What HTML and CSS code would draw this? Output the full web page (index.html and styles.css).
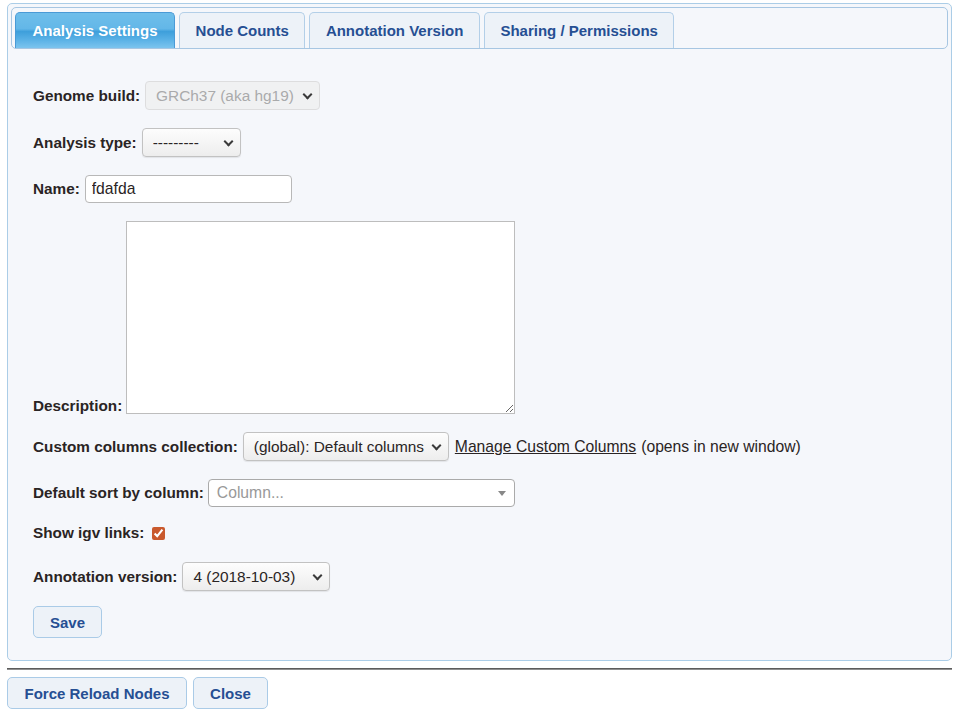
FILE: index.html
```html
<!DOCTYPE html>
<html>
<head>
<meta charset="utf-8">
<link rel="stylesheet" href="styles.css">
</head>
<body>
<div class="dialog">
  <div class="tabs">
    <ul class="tab-nav">
      <li class="tab active">Analysis Settings</li>
      <li class="tab">Node Counts</li>
      <li class="tab">Annotation Version</li>
      <li class="tab">Sharing / Permissions</li>
    </ul>
    <div class="panel">
      <form class="settings">
        <div class="row">
          <label class="lbl">Genome build:</label>
          <span class="selwrap"><select class="sel sel-genome" disabled><option>GRCh37 (aka hg19)</option></select></span>
        </div>
        <div class="row">
          <label class="lbl">Analysis type:</label>
          <span class="selwrap"><select class="sel sel-type"><option>---------</option></select></span>
        </div>
        <div class="row">
          <label class="lbl">Name:</label>
          <input class="txt" type="text" value="fdafda">
        </div>
        <div class="row row-desc">
          <label class="lbl">Description:</label>
          <textarea class="desc"></textarea>
        </div>
        <div class="row">
          <label class="lbl">Custom columns collection:</label>
          <span class="selwrap"><select class="sel sel-cols"><option>(global): Default columns</option></select></span>
          <a class="link" href="#">Manage Custom Columns</a><span class="note">(opens in new window)</span>
        </div>
        <div class="row row-sort">
          <label class="lbl">Default sort by column:</label>
          <div class="combo"><span class="placeholder">Column...</span><span class="caret"></span></div>
        </div>
        <div class="row row-check">
          <label class="lbl">Show igv links:</label>
          <input class="chk" type="checkbox" checked>
        </div>
        <div class="row">
          <label class="lbl">Annotation version:</label>
          <span class="selwrap"><select class="sel sel-anno"><option>4 (2018-10-03)</option></select></span>
        </div>
        <div class="row row-save">
          <button type="button" class="btn">Save</button>
        </div>
      </form>
    </div>
  </div>
</div>
<div class="button-pane">
  <button type="button" class="btn btn-wide">Force Reload Nodes</button>
  <button type="button" class="btn">Close</button>
</div>
</body>
</html>
```

FILE: styles.css
```css
html, body {
  margin: 0;
  padding: 0;
  background: #ffffff;
}
body {
  font-family: "Liberation Sans", Arial, sans-serif;
  font-size: 15px;
  color: #222222;
  padding: 3px 7px 0 7px;
}
.dialog {
  border: 1px solid #abcde7;
  border-radius: 5px;
  background: #f5f7fb;
  padding: 3px;
  height: 658px;
  box-sizing: border-box;
}
.tab-nav {
  list-style: none;
  margin: 0;
  padding: 4px 3px 0 3px;
  border: 1px solid #a7c6e2;
  border-radius: 5px;
  background: #f5f7fb;
  display: flex;
  gap: 4px;
  height: 36px;
}
.tab {
  height: 36px;
  box-sizing: border-box;
  padding: 0 15.5px;
  border: 1px solid #b3cfe8;
  border-bottom: 0;
  border-radius: 5px 5px 0 0;
  background: #edf2f8;
  color: #264f93;
  font-weight: bold;
  display: flex;
  align-items: center;
}
.tab.active {
  border-color: #4a9ad6;
  color: #ffffff;
  padding: 0 16.5px;
  background: linear-gradient(#6fbeea 0%, #63b7e8 45%, #3e9fdb 53%, #58b0e5 75%, #7cc4ee 100%);
}
.panel {
  padding: 32px 22px 0 22px;
}
.settings {
  display: flex;
  flex-direction: column;
  gap: 18px;
  font-size: 15.7px;
}
.row {
  display: flex;
  align-items: center;
  gap: 5px;
}
.row-desc {
  align-items: flex-end;
  gap: 4px;
}
.row-desc .lbl {
  line-height: 16px;
}
.row-sort {
  gap: 4px;
}
.row-check {
  height: 16px;
  gap: 8px;
  margin-bottom: 3px;
}
.row-save {
  margin-top: -3px;
}
.lbl {
  font-weight: bold;
  font-size: 15.3px;
  color: #2a2424;
}
.selwrap {
  position: relative;
  display: inline-flex;
}
.selwrap::after {
  content: "";
  position: absolute;
  right: 9px;
  top: 10px;
  width: 5px;
  height: 5px;
  border-right: 2px solid #3a3a3a;
  border-bottom: 2px solid #3a3a3a;
  transform: rotate(45deg);
  pointer-events: none;
}
.sel {
  appearance: none;
  -webkit-appearance: none;
  font-family: "Liberation Sans", Arial, sans-serif;
  font-size: 15.4px;
  height: 29px;
  box-sizing: border-box;
  border: 1px solid #c2c2c2;
  border-radius: 4px;
  background: linear-gradient(#fdfdfd, #ededed);
  box-shadow: 0 1px 1px rgba(0, 0, 0, 0.08);
  color: #2a2424;
  padding: 0 20px 0 10px;
  margin: 0;
}
.sel-genome {
  width: 175px;
  color: #8a8a8a;
  background: #efefef;
  border-color: #d3d3d3;
  box-shadow: none;
}
.sel-type { width: 99px; }
.sel-cols { width: 206px; }
.sel-anno { width: 148px; }
.txt {
  font-family: "Liberation Sans", Arial, sans-serif;
  font-size: 15.7px;
  width: 207px;
  height: 28px;
  box-sizing: border-box;
  border: 1px solid #b8b8b8;
  border-radius: 4px;
  padding: 0 6px;
  color: #2a2424;
  background: #ffffff;
}
.desc {
  width: 389px;
  height: 193px;
  box-sizing: border-box;
  border: 1px solid #bdbdbd;
  border-radius: 0;
  background: #ffffff;
  margin: 0;
}
.link {
  color: #2a2424;
  text-decoration: underline;
  margin-left: 1px;
}
.note {
  color: #2a2424;
}
.combo {
  width: 307px;
  height: 28px;
  box-sizing: border-box;
  border: 1px solid #aaaaaa;
  border-radius: 4px;
  background: #ffffff;
  display: flex;
  align-items: center;
  justify-content: space-between;
  padding: 0 8px 0 8px;
}
.placeholder {
  color: #999999;
}
.caret {
  width: 0;
  height: 0;
  border-left: 4px solid transparent;
  border-right: 4px solid transparent;
  border-top: 5px solid #888888;
}
.chk {
  margin: 0;
  width: 13px;
  height: 13px;
  accent-color: #c9592d;
}
.btn {
  font-family: "Liberation Sans", Arial, sans-serif;
  font-size: 15px;
  font-weight: bold;
  color: #264f93;
  background: #edf2f8;
  border: 1px solid #aacbe7;
  border-radius: 5px;
  height: 32px;
  padding: 0 16px;
  cursor: pointer;
}
.btn-wide {
  padding: 0 16.5px;
}
.button-pane {
  margin-top: 7px;
  border-top: 1px solid #5c5c5c;
  box-shadow: 0 1px 0 #8f8f8f inset;
  padding-top: 8px;
  display: flex;
  gap: 6px;
}
```
